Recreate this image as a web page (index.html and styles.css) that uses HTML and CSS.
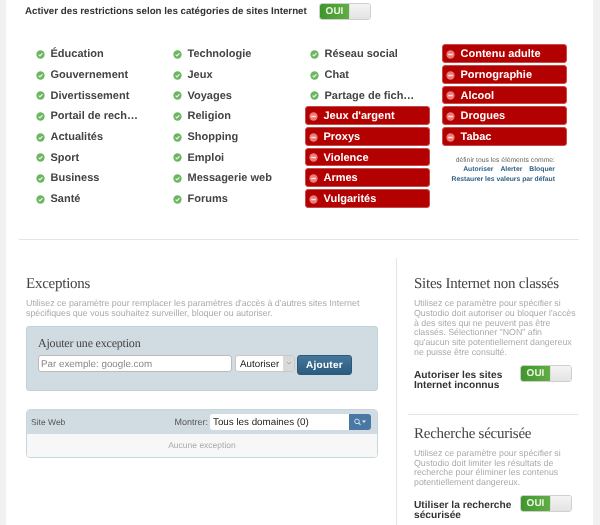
FILE: index.html
```html
<!DOCTYPE html>
<html lang="fr">
<head>
<meta charset="utf-8">
<title>Restrictions</title>
<link rel="stylesheet" href="styles.css">
</head>
<body>
<svg class="defs" width="0" height="0" aria-hidden="true">
  <symbol id="ok" viewBox="0 0 10 10"><circle cx="5" cy="5" r="4.6" fill="#6cb661"/><path d="M2.9 5.1l1.5 1.5 2.8-3" fill="none" stroke="#e8f3e4" stroke-width="1.3"/></symbol>
  <symbol id="no" viewBox="0 0 10 10"><circle cx="5" cy="5" r="4.6" fill="#ee7a78"/><rect x="2.4" y="4.2" width="5.2" height="1.6" fill="#fbe3e2"/></symbol>
</svg>
<main class="page">
  <div class="head-row">
    <span class="head-label">Activer des restrictions selon les catégories de sites Internet</span>
    <span class="toggle"><span class="toggle-on">OUI</span><span class="toggle-off"></span></span>
  </div>

  <section class="cats">
    <ul class="col">
      <li class="cat"><svg class="ico"><use href="#ok"/></svg>Éducation</li>
      <li class="cat"><svg class="ico"><use href="#ok"/></svg>Gouvernement</li>
      <li class="cat"><svg class="ico"><use href="#ok"/></svg>Divertissement</li>
      <li class="cat"><svg class="ico"><use href="#ok"/></svg>Portail de rech…</li>
      <li class="cat"><svg class="ico"><use href="#ok"/></svg>Actualités</li>
      <li class="cat"><svg class="ico"><use href="#ok"/></svg>Sport</li>
      <li class="cat"><svg class="ico"><use href="#ok"/></svg>Business</li>
      <li class="cat"><svg class="ico"><use href="#ok"/></svg>Santé</li>
    </ul>
    <ul class="col">
      <li class="cat"><svg class="ico"><use href="#ok"/></svg>Technologie</li>
      <li class="cat"><svg class="ico"><use href="#ok"/></svg>Jeux</li>
      <li class="cat"><svg class="ico"><use href="#ok"/></svg>Voyages</li>
      <li class="cat"><svg class="ico"><use href="#ok"/></svg>Religion</li>
      <li class="cat"><svg class="ico"><use href="#ok"/></svg>Shopping</li>
      <li class="cat"><svg class="ico"><use href="#ok"/></svg>Emploi</li>
      <li class="cat"><svg class="ico"><use href="#ok"/></svg>Messagerie web</li>
      <li class="cat"><svg class="ico"><use href="#ok"/></svg>Forums</li>
    </ul>
    <ul class="col">
      <li class="cat"><svg class="ico"><use href="#ok"/></svg>Réseau social</li>
      <li class="cat"><svg class="ico"><use href="#ok"/></svg>Chat</li>
      <li class="cat"><svg class="ico"><use href="#ok"/></svg>Partage de fich…</li>
      <li class="cat blocked"><svg class="ico"><use href="#no"/></svg>Jeux d'argent</li>
      <li class="cat blocked"><svg class="ico"><use href="#no"/></svg>Proxys</li>
      <li class="cat blocked"><svg class="ico"><use href="#no"/></svg>Violence</li>
      <li class="cat blocked"><svg class="ico"><use href="#no"/></svg>Armes</li>
      <li class="cat blocked"><svg class="ico"><use href="#no"/></svg>Vulgarités</li>
    </ul>
    <ul class="col">
      <li class="cat blocked"><svg class="ico"><use href="#no"/></svg>Contenu adulte</li>
      <li class="cat blocked"><svg class="ico"><use href="#no"/></svg>Pornographie</li>
      <li class="cat blocked"><svg class="ico"><use href="#no"/></svg>Alcool</li>
      <li class="cat blocked"><svg class="ico"><use href="#no"/></svg>Drogues</li>
      <li class="cat blocked"><svg class="ico"><use href="#no"/></svg>Tabac</li>
      <li class="set-all">
        <div>définir tous les éléments comme:</div>
        <div class="set-links"><a>Autoriser</a><a>Alerter</a><a>Bloquer</a></div>
        <div class="set-links"><a>Restaurer les valeurs par défaut</a></div>
      </li>
    </ul>
  </section>

  <hr class="rule">

  <div class="lower">
    <section class="left">
      <h2 class="title">Exceptions</h2>
      <p class="desc">Utilisez ce paramètre pour remplacer les paramètres d'accès à d'autres sites Internet spécifiques que vous souhaitez surveiller, bloquer ou autoriser.</p>
      <div class="add-box">
        <h3 class="add-title">Ajouter une exception</h3>
        <div class="add-row">
          <span class="field">Par exemple: google.com</span>
          <span class="select">Autoriser<span class="select-arrow"><svg width="6" height="4" viewBox="0 0 6 4"><path d="M1 1l2 2 2-2" fill="none" stroke="#999" stroke-width="0.8"/></svg></span></span>
          <span class="btn">Ajouter</span>
        </div>
      </div>
      <div class="table">
        <div class="table-head">
          <span class="th-site">Site Web</span>
          <span class="th-show">Montrer:</span>
          <span class="combo">Tous les domaines (0)</span>
          <span class="combo-btn"><svg width="14" height="8" viewBox="0 0 14 8"><circle cx="4" cy="3.4" r="2.3" fill="none" stroke="#cfe0ec" stroke-width="1"/><path d="M5.7 5l1.8 1.8" stroke="#cfe0ec" stroke-width="1.2"/><path d="M9 2.5h4l-2 2.4z" fill="#dfeaf2"/></svg></span>
        </div>
        <div class="table-body">Aucune exception</div>
      </div>
    </section>

    <aside class="side">
      <section class="side-block">
        <h2 class="title">Sites Internet non classés</h2>
        <p class="desc">Utilisez ce paramètre pour spécifier si Qustodio doit autoriser ou bloquer l'accès à des sites qui ne peuvent pas être classés. Sélectionner "NON" afin qu'aucun site potentiellement dangereux ne puisse être consulté.</p>
        <div class="opt-row">
          <span class="opt-label">Autoriser les sites Internet inconnus</span>
          <span class="toggle"><span class="toggle-on">OUI</span><span class="toggle-off"></span></span>
        </div>
      </section>
      <hr class="side-rule">
      <section class="side-block">
        <h2 class="title">Recherche sécurisée</h2>
        <p class="desc">Utilisez ce paramètre pour spécifier si Qustodio doit limiter les résultats de recherche pour éliminer les contenus potentiellement dangereux.</p>
        <div class="opt-row">
          <span class="opt-label">Utiliser la recherche sécurisée</span>
          <span class="toggle"><span class="toggle-on">OUI</span><span class="toggle-off"></span></span>
        </div>
      </section>
    </aside>
  </div>
</main>
</body>
</html>
```
FILE: styles.css
```css
* { box-sizing: border-box; }
html, body { margin: 0; padding: 0; height: 100%; }
body {
  background: #f1f1f1;
  font-family: "Liberation Sans", Arial, sans-serif;
  color: #444;
  overflow: hidden;
  text-rendering: geometricPrecision;
}
.defs { position: absolute; }
.page {
  margin-left: 6px;
  width: 587px;
  height: 525px;
  background: #fff;
  overflow: hidden;
  filter: blur(0.3px);
}
.head-row {
  display: flex;
  align-items: center;
  height: 23px;
  padding-left: 19px;
}
.head-label {
  font-size: 9.75px;
  font-weight: bold;
  color: #333;
  width: 294px;
  white-space: nowrap;
}
.toggle {
  display: inline-flex;
  flex: none;
  width: 52px;
  height: 17px;
  border: 1px solid #cfcfcf;
  border-radius: 3px;
  overflow: hidden;
  font-size: 10px;
  font-weight: bold;
  color: #e8f5df;
}
.toggle-on {
  width: 29px;
  background: linear-gradient(90deg, #3f962c, #62ad45);
  display: flex;
  align-items: center;
  justify-content: center;
}
.toggle-off {
  flex: 1;
  background: linear-gradient(#f4f4f4, #e3e3e3);
  border-left: 1px solid #ddd;
}
.cats {
  display: flex;
  gap: 12px;
  padding: 21.3px 0 0 25px;
  height: 216px;
}
.col {
  list-style: none;
  margin: 0;
  padding: 0;
  width: 125px;
  display: flex;
  flex-direction: column;
  gap: 2px;
}
.cat {
  display: flex;
  align-items: center;
  height: 18.67px;
  padding: 1.6px 0 0 5px;
  font-size: 11px;
  font-weight: bold;
  color: #444;
  white-space: nowrap;
}
.ico { width: 9px; height: 9px; margin-right: 5.5px; flex: none; }
.blocked {
  background: #b30000;
  color: #fff;
  border-radius: 3px;
  border: 1px solid #c94a4a;
  padding: 1.6px 0 0 3px;
}
.set-all {
  margin-top: 8px;
  padding-right: 12px;
  text-align: right;
  font-size: 6.8px;
  line-height: 9.8px;
  color: #666;
}
.set-links a { color: #2f5f82; font-weight: bold; }
.set-links a + a { margin-left: 7px; }
.rule {
  margin: 0 14px 0 13px;
  border: 0;
  border-top: 1px solid #e4e4e4;
  height: 1px;
}
.lower { display: flex; padding-top: 18px; padding-left: 20px; }
.left { width: 370px; padding-top: 16px; }
.title {
  margin: 0;
  font-family: "Liberation Serif", serif;
  font-weight: normal;
  font-size: 15px;
  letter-spacing: -0.25px;
  line-height: 20px;
  color: #444;
}
.desc {
  margin: 5px 0 0;
  font-size: 8.9px;
  line-height: 9.8px;
  color: #aaa;
}
.add-box {
  margin-top: 7px;
  width: 352px;
  height: 65px;
  background: #d1dce2;
  border: 1px solid #bfd2dc;
  border-radius: 3px;
  padding: 9px 11px 0;
}
.add-title {
  margin: 0 0 4px;
  font-family: "Liberation Serif", serif;
  font-weight: normal;
  font-size: 12px;
  letter-spacing: -0.2px;
  line-height: 15px;
  color: #444;
}
.add-row { display: flex; align-items: flex-start; }
.field {
  width: 194px;
  height: 17px;
  background: #fff;
  border: 1px solid #bbb;
  border-radius: 3px;
  font-size: 9.8px;
  line-height: 17px;
  padding-left: 2px;
  color: #888;
}
.select {
  margin-left: 3px;
  width: 60px;
  height: 17px;
  background: #fff;
  border: 1px solid #c8c8c8;
  border-radius: 3px;
  font-size: 9.8px;
  line-height: 17px;
  padding-left: 4px;
  color: #222;
  display: flex;
  justify-content: space-between;
}
.select-arrow {
  width: 11px;
  background: #d9d9d9;
  display: flex;
  align-items: center;
  justify-content: center;
}
.btn {
  margin-left: 2px;
  width: 55px;
  height: 20px;
  background: linear-gradient(#45779b, #2b5b7f);
  border: 1px solid #2d5876;
  border-radius: 3px;
  color: #fff;
  font-size: 10px;
  font-weight: bold;
  letter-spacing: 0.3px;
  text-align: center;
  line-height: 19px;
}
.table {
  margin-top: 18px;
  width: 352px;
  border: 1px solid #c6d7df;
  border-radius: 4px;
  overflow: hidden;
}
.table-head {
  display: flex;
  align-items: center;
  height: 24px;
  background: #d1dce2;
  padding: 0 6px 0 4px;
  font-size: 8.5px;
  color: #555;
}
.th-site { flex: 1; }
.th-show { margin-right: 2px; font-size: 9px; }
.combo {
  width: 139px;
  height: 16px;
  background: #fff;
  border-radius: 3px 0 0 3px;
  font-size: 9.8px;
  line-height: 17px;
  padding-left: 3px;
  color: #222;
}
.combo-btn {
  width: 22px;
  height: 16px;
  background: #4a78a4;
  border-radius: 0 3px 3px 0;
  display: flex;
  align-items: center;
  justify-content: center;
}
.table-body {
  height: 23px;
  background: #f7f7f7;
  text-align: center;
  font-size: 8.5px;
  line-height: 22px;
  color: #aaa;
}
.side {
  width: 197px;
  height: 270px;
  border-left: 1px solid #e4e4e4;
  padding-top: 16px;
}
.side-block { padding-left: 17px; width: 179px; }
.side-block .desc { font-size: 8.8px; }
.opt-row { display: flex; justify-content: space-between; width: 158px; margin-top: 7px; }
.opt-label {
  width: 100px;
  font-size: 10.2px;
  font-weight: bold;
  line-height: 10px;
  color: #333;
  padding-top: 6px;
}
.side-rule {
  margin: 23px 0 9px 11px;
  width: 170px;
  border: 0;
  border-top: 1px solid #e4e4e4;
  height: 1px;
}
```
